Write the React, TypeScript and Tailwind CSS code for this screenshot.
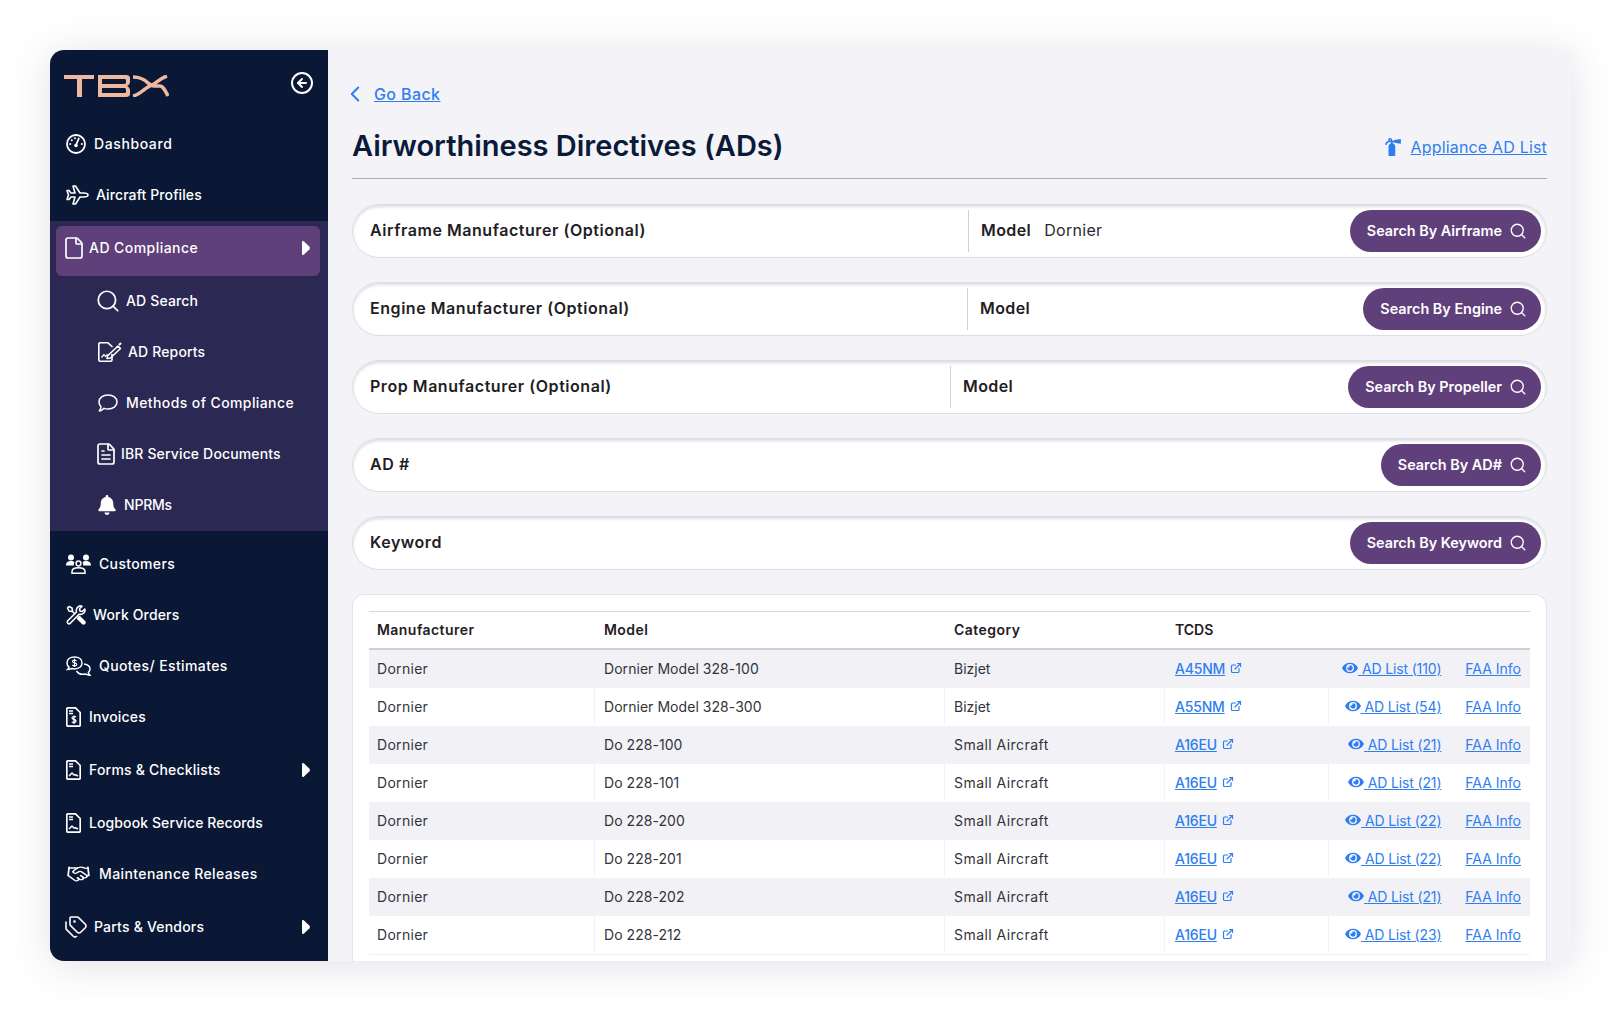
import React from "react";
import { ChevronLeft, CircleArrowLeft, ExternalLink, File, FileText, Handshake, Search, Tags } from "lucide-react";
import { FaBell, FaEye, FaFireExtinguisher } from "react-icons/fa";

const font = "font-['Inter','Liberation_Sans',sans-serif]";

function Logo() {
  return (
    <svg width="105" height="22" viewBox="0 0 105 22" aria-label="TBX" fill="none">
      <g fill="#efb9a0">
        <rect x="0" y="0" width="30" height="4" />
        <rect x="13" y="0" width="5" height="22" />
        <path d="M34 0 H62 C65 0 66 1.500 66 3.500 V6.500 C66 8.500 65 10 63 11 C65 12 66 13.500 66 15.500 V18.500 C66 20.500 65 22 62 22 H34 Z M38 4 V9 H60 C61.500 9 62 8.500 62 7 V5.500 C62 4.500 61.500 4 60 4 Z M38 13 V18 H60 C61.500 18 62 17.500 62 16.500 V15 C62 13.500 61.500 13 60 13 Z" fillRule="evenodd" />
      </g>
      <g stroke="#efb9a0" fill="none" strokeWidth="3.500">
        <path d="M69 2 C76 2 80 4 84 8 C88 12 91 11 96 11 C99 11 101 15 104 21" />
        <path d="M69 21 C74 20 77 17 81 14 C84 11.500 86 11 90 9 C94 6 97 3 103 1" />
      </g>
    </svg>
  );
}

function Caret({ className = "" }: { className?: string }) {
  return (
    <svg width="8" height="14" viewBox="0 0 8 14" fill="white" className={className}>
      <path d="M1.800 0.300 L7.500 5.800 Q8.300 7 7.500 8.200 L1.800 13.700 Q0 14.600 0 12.800 V1.200 Q0 -0.600 1.800 0.300 Z" />
    </svg>
  );
}

function Gauge() {
  return (
    <svg width="20" height="20" viewBox="0 0 20 20" fill="none" stroke="white" strokeWidth="1.800">
      <circle cx="10" cy="10" r="9" />
      <path d="M12.800 4.500 L10 11" strokeWidth="1.800" strokeLinecap="round" />
      <circle cx="10" cy="11.500" r="1.800" fill="white" stroke="none" />
      <g fill="white" stroke="none">
        <circle cx="4.200" cy="10" r="1" />
        <circle cx="5.800" cy="6.200" r="1" />
        <circle cx="9" cy="4.200" r="1" />
        <circle cx="15.800" cy="10" r="1" />
      </g>
    </svg>
  );
}

function PlaneIcon() {
  return (
    <svg width="23" height="20" viewBox="0 0 23 20" fill="none" stroke="white" strokeWidth="1.600" strokeLinejoin="round">
      <path d="M22 10 C22 9 20 8 17.500 8 H14 L9.500 1 H7 L9 8 H5 L3 5.500 H1 L2.500 10 L1 14.500 H3 L5 12 H9 L7 19 H9.500 L14 12 H17.500 C20 12 22 11 22 10 Z" />
    </svg>
  );
}

function Customers() {
  return (
    <svg width="25" height="20" viewBox="0 0 25 20" fill="white">
      <circle cx="5" cy="3.500" r="3" />
      <circle cx="20" cy="3.500" r="3" />
      <path d="M0 11.500 C0 8 2.500 7 5 7 C6.500 7 7.500 7.500 8.500 8.200 C7.700 9.200 7.700 10.500 8 11.500 Z" />
      <path d="M25 11.500 C25 8 22.500 7 20 7 C18.500 7 17.500 7.500 16.500 8.200 C17.300 9.200 17.300 10.500 17 11.500 Z" />
      <circle cx="12.500" cy="9.500" r="2.400" fill="none" stroke="white" strokeWidth="1.500" />
      <path d="M6 19.300 V17.500 C6 15 8.500 13.800 12.500 13.800 C16.500 13.800 19 15 19 17.500 V19.300 Z" fill="none" stroke="white" strokeWidth="1.500" />
    </svg>
  );
}

function Tools() {
  return (
    <svg width="20" height="20" viewBox="0 0 20 20" fill="#0a1836" stroke="white" strokeWidth="1.600" strokeLinejoin="round">
      <path d="M1.500 3 L3 1.500 L6 3 L6.500 5.500 L5.500 6.500 L3 6 Z" />
      <path d="M6 6 L12 12" />
      <path d="M11.500 13.500 L13.500 11.500 L18.500 16.500 A1.400 1.400 0 0 1 16.500 18.500 Z" fill="white" />
      <path d="M1.800 15.800 L10.500 7 C10 5 10.500 3 12 2 C13.200 1 15 0.800 16 1.200 L13.500 3.700 L14 6 L16.300 6.500 L18.800 4 C19.200 5.500 18.800 7 17.800 8 C16.500 9.300 14.800 9.700 13 9.200 L4.300 18.200 A1.700 1.700 0 0 1 1.800 15.800 Z" />
    </svg>
  );
}

function Quotes() {
  return (
    <svg width="25" height="20" viewBox="0 0 25 20" fill="none" stroke="white" strokeWidth="1.500">
      <path d="M8.500 1 C4 1 1 3.500 1 7 C1 8.800 1.800 10.200 3 11.200 C2.800 12 2 13 1.500 13.500 C3.500 13.500 5 12.800 6 12.500 C6.800 12.800 7.600 12.900 8.500 12.900 C13 12.900 16 10.500 16 7 C16 3.500 13 1 8.500 1 Z" />
      <path d="M18 8 C21.500 8.500 24 10.400 24 13 C24 14.500 23.200 15.700 22.300 16.500 C22.500 17.500 23.300 18.700 24 19.300 C21.800 19.300 20.500 18.500 19.500 18 C15 18.800 12 17.500 10.500 15" />
      <path d="M10.500 4.800 C9.500 3.800 6.500 3.800 6.500 5.500 C6.500 7.500 10.800 6.300 10.800 8.500 C10.800 10.200 7.500 10.200 6.300 9 M8.500 2.800 V11" strokeWidth="1.100" />
    </svg>
  );
}

function DocBase({ children }: { children: React.ReactNode }) {
  return (
    <svg width="15" height="20" viewBox="0 0 15 20" fill="none" stroke="white" strokeWidth="1.700" strokeLinejoin="round">
      <path d="M2 0.800 H9.500 L14.200 5.500 V18 A1.200 1.200 0 0 1 13 19.200 H2 A1.200 1.200 0 0 1 0.800 18 V2 A1.200 1.200 0 0 1 2 0.800 Z" />
      <path d="M3 4 H7 M3 6.500 H7" strokeWidth="1.300" />
      {children}
    </svg>
  );
}

function Invoice() {
  return (
    <DocBase>
      <path d="M10 10 C9 9.200 6 9.200 6 11 C6 13 10 12 10 14 C10 15.800 7 15.800 5.800 14.900 M8 8.500 V17" strokeWidth="1.300" />
    </DocBase>
  );
}

function FormDoc() {
  return (
    <DocBase>
      <path d="M3 16 L6 13 L8 15 L9.500 14.800 L12 16" strokeWidth="1.500" />
    </DocBase>
  );
}

function Reports() {
  return (
    <svg width="24" height="20" viewBox="0 0 24 20" fill="none" stroke="white" strokeWidth="1.600" strokeLinejoin="round">
      <path d="M14 12 V18 A1.200 1.200 0 0 1 12.800 19.200 H2 A1.200 1.200 0 0 1 0.800 18 V2 A1.200 1.200 0 0 1 2 0.800 H10 L14.500 5" />
      <path d="M3.500 15.500 L6 12.500 L7.500 14.500 L9.500 12" strokeWidth="1.200" />
      <path d="M9.500 14 L20 4 L22.500 6.500 L12.500 16 L9 16.500 Z" />
      <path d="M21 3 L23 1" strokeWidth="2" />
    </svg>
  );
}

function Bubble() {
  return (
    <svg width="20" height="18" viewBox="0 0 20 18" fill="none" stroke="white" strokeWidth="1.500" strokeLinejoin="round">
      <path d="M10 1 C15 1 19 3.800 19 8 C19 12.200 15 15 10 15 C8.500 15 7 14.800 6 14.300 C5 15.500 3 16.800 1.200 17 C2 16 3 14.500 3 12.800 C1.800 11.500 1 9.800 1 8 C1 3.800 5 1 10 1 Z" />
    </svg>
  );
}

type Item = { icon: React.ReactNode; label: string; gap: string; h?: string; caret?: boolean; t?: string };

function Row({ icon, label, gap, h = "h-[51px]", caret, t = "tracking-[0.15px]" }: Item) {
  return (
    <div className={`flex ${h} items-center pr-[18px] pl-[16px] text-white`}>
      <span className="flex w-auto shrink-0 items-center">{icon}</span>
      <span className={`${gap} ${t} text-[14px] leading-none font-medium`}>{label}</span>
      {caret && <Caret className="ml-auto" />}
    </div>
  );
}

function SubRow({ icon, label, gap, t = "tracking-[0.15px]" }: Item) {
  return (
    <div className="flex h-[51px] items-center pl-[48px] text-white">
      <span className="flex shrink-0 items-center">{icon}</span>
      <span className={`${gap} ${t} text-[14px] leading-none font-medium`}>{label}</span>
    </div>
  );
}

function Sidebar() {
  return (
    <aside className="flex w-[278px] shrink-0 flex-col bg-[#0a1836]">
      <div className="flex h-[68.500px] items-start justify-between pt-[25px] pr-[14px] pl-[14px]">
        <Logo />
        <CircleArrowLeft className="mt-[-4px] h-[24px] w-[24px] text-white" strokeWidth={2} />
      </div>
      <Row icon={<Gauge />} label="Dashboard" gap="ml-[8px]" t="tracking-[0.6px]" />
      <Row icon={<PlaneIcon />} label="Aircraft Profiles" gap="ml-[7px]" t="tracking-[0.1px]" />
      <div className="bg-[#2b2853] pt-[5px]">
        <div className="mr-[8px] ml-[6px] flex h-[50px] items-center rounded-[6px] bg-[#60407b] pr-[10px] pb-[5px] pl-[6px] text-white">
          <File className="h-[24px] w-[24px]" strokeWidth={1.700} />
          <span className="ml-[3px] text-[14px] leading-none font-medium tracking-[0.45px]">AD Compliance</span>
          <Caret className="ml-auto" />
        </div>
        <SubRow icon={<Search className="-ml-[3px] h-[26px] w-[26px]" strokeWidth={1.600} />} label="AD Search" gap="ml-[5px]" />
        <SubRow icon={<Reports />} label="AD Reports" gap="ml-[6px]" />
        <SubRow icon={<Bubble />} label="Methods of Compliance" gap="ml-[8px]" t="tracking-[0.4px]" />
        <SubRow icon={<FileText className="-ml-[4px] h-[24px] w-[24px]" strokeWidth={1.700} />} label="IBR Service Documents" gap="ml-[3px]" />
        <SubRow icon={<FaBell className="h-[20px] w-[18px]" />} label="NPRMs" gap="ml-[8px]" t="tracking-[-0.2px]" />
      </div>
      <div className="mt-[8px]">
        <Row icon={<Customers />} label="Customers" gap="ml-[8px]" t="tracking-[0.35px]" />
        <Row icon={<Tools />} label="Work Orders" gap="ml-[7px]" />
        <Row icon={<Quotes />} label="Quotes/ Estimates" gap="ml-[8px]" t="tracking-[0.4px]" />
        <Row icon={<Invoice />} label="Invoices" gap="ml-[8px]" />
        <Row icon={<FormDoc />} label="Forms & Checklists" gap="ml-[8px]" h="h-[53px] pt-[2px]" caret t="tracking-[0.2px]" />
        <Row icon={<FormDoc />} label="Logbook Service Records" gap="ml-[8px]" h="h-[53px] pt-[2px]" t="tracking-[0.1px]" />
        <Row icon={<Handshake className="h-[18px] w-[25px]" preserveAspectRatio="none" strokeWidth={1.700} />} label="Maintenance Releases" gap="ml-[8px]" t="tracking-[0.4px]" />
        <Row icon={<Tags className="-ml-[2px] h-[24px] w-[24px]" strokeWidth={1.600} />} label="Parts & Vendors" gap="ml-[6px]" h="h-[53px] pt-[2px]" caret t="tracking-[0.2px]" />
      </div>
    </aside>
  );
}

function SearchBar({ label, button, model, divider, modelValue }: { label: string; button: string; model?: boolean; divider?: string; modelValue?: string }) {
  return (
    <div className="flex h-[54px] items-center rounded-full border border-[#dedde6] bg-white pr-[5px] pl-[17px] shadow-[inset_0_2px_3px_rgba(120,120,140,0.25)]">
      <div className={`${model ? divider : "flex-1"} shrink-0 pb-[2px] text-[16px] font-semibold tracking-[0.55px] text-[#1f2024]`}>{label}</div>
      {model && (
        <div className="flex h-[42px] flex-1 items-center border-l border-[#cfcfd6] pb-[2px] pl-[12px]">
          <span className="text-[16px] font-semibold tracking-[0.4px] text-[#1f2024]">Model</span>
          {modelValue && <span className="ml-[13px] text-[16px] tracking-[0.3px] text-[#2a2b30]">{modelValue}</span>}
        </div>
      )}
      <button className="flex h-[42px] shrink-0 items-center gap-[7px] rounded-full bg-[#60407b] pr-[14px] pl-[17px] text-[14.400px] font-semibold text-white">
        {button}
        <Search className="h-[18px] w-[18px]" strokeWidth={1.800} />
      </button>
    </div>
  );
}

const rows = [
  ["Dornier Model 328-100", "Bizjet", "A45NM", "AD List (110)"],
  ["Dornier Model 328-300", "Bizjet", "A55NM", "AD List (54)"],
  ["Do 228-100", "Small Aircraft", "A16EU", "AD List (21)"],
  ["Do 228-101", "Small Aircraft", "A16EU", "AD List (21)"],
  ["Do 228-200", "Small Aircraft", "A16EU", "AD List (22)"],
  ["Do 228-201", "Small Aircraft", "A16EU", "AD List (22)"],
  ["Do 228-202", "Small Aircraft", "A16EU", "AD List (21)"],
  ["Do 228-212", "Small Aircraft", "A16EU", "AD List (23)"],
];

const gridCols = "grid grid-cols-[226px_350px_220px_164px_1fr]";

function Table() {
  return (
    <div className="mt-[24px] min-h-0 flex-1 overflow-hidden rounded-t-[12px] border border-b-0 border-[#e4e3ec] bg-white px-[16px] pt-[16px]">
      <div className="border-t border-b border-t-[#d5d5db] border-b-[#f1f1f5]">
        <div className={`${gridCols} h-[38px] items-center border-b-2 border-[#cfcfd4] pb-[2px] text-[14px] font-semibold tracking-[0.45px] text-[#1f2024]`}>
          <div className="pl-[8px]">Manufacturer</div>
          <div className="pl-[9px]">Model</div>
          <div className="pl-[9px]">Category</div>
          <div className="pl-[10px] tracking-normal">TCDS</div>
          <div />
        </div>
        {rows.map((r, i) => (
          <div key={i} className={`${gridCols} h-[38px] pb-[2px] text-[14px] text-[#33343a] ${i % 2 === 0 ? "bg-[#f2f1f6]" : "bg-white"}`}>
            <div className="flex items-center border-r border-[#f1f1f5] pl-[8px] tracking-[0.3px]">Dornier</div>
            <div className="flex items-center border-r border-[#f1f1f5] pl-[9px] tracking-[0.05px]">{r[0]}</div>
            <div className={`flex items-center border-r border-[#f1f1f5] pl-[9px] ${r[1] === "Bizjet" ? "tracking-normal" : "tracking-[0.45px]"}`}>{r[1]}</div>
            <div className="flex items-center gap-[5px] border-r border-[#f1f1f5] pl-[10px] text-[#2f7ef0]">
              <span className="font-medium tracking-[-0.2px] underline">{r[2]}</span>
              <ExternalLink className="h-[12px] w-[12px]" strokeWidth={2.400} />
            </div>
            <div className="flex items-center justify-end pr-[9px] text-[#2f7ef0]">
              <FaEye className="h-[14px] w-[16px]" />
              <span className="ml-0 whitespace-pre tracking-[-0.15px] underline"> {r[3]}</span>
              <span className="ml-[24px] underline">FAA Info</span>
            </div>
          </div>
        ))}
      </div>
    </div>
  );
}

export default function App() {
  return (
    <div className={`${font} h-[1011px] w-full overflow-hidden bg-white pt-[50px] pl-[50px]`}>
      <div className="flex h-[911px] w-[1521px] overflow-hidden rounded-l-[14px] bg-[#f4f3f8] shadow-[0_4px_40px_rgba(70,60,100,0.16)]">
        <Sidebar />
        <main className="flex min-w-0 flex-1 flex-col px-[24px]">
          <div className="mt-[34px] flex items-center text-[#2f7ef0]">
            <ChevronLeft className="-my-[3px] -ml-[10px] h-[26px] w-[26px]" strokeWidth={1.800} />
            <span className="ml-[6px] text-[16px] leading-[20px] font-medium tracking-[0.4px] underline">Go Back</span>
          </div>
          <div className="mt-[20px] flex h-[42px] items-center justify-between">
            <h1 className="text-[29px] leading-none font-semibold text-[#0b1a38]">Airworthiness Directives (ADs)</h1>
            <div className="mt-[3px] flex items-center gap-[8px] text-[#2f7ef0]">
              <FaFireExtinguisher className="h-[18px] w-[18px]" />
              <span className="text-[16px] tracking-[0.18px] underline">Appliance AD List</span>
            </div>
          </div>
          <div className="mt-[12px] border-t border-[#a9aab8]" />
          <div className="mt-[25px] flex flex-col gap-[24px]">
            <SearchBar label="Airframe Manufacturer (Optional)" button="Search By Airframe" model divider="w-[598px]" modelValue="Dornier" />
            <SearchBar label="Engine Manufacturer (Optional)" button="Search By Engine" model divider="w-[597px]" />
            <SearchBar label="Prop Manufacturer (Optional)" button="Search By Propeller" model divider="w-[580px]" />
            <SearchBar label="AD #" button="Search By AD#" />
            <SearchBar label="Keyword" button="Search By Keyword" />
          </div>
          <Table />
        </main>
      </div>
    </div>
  );
}
